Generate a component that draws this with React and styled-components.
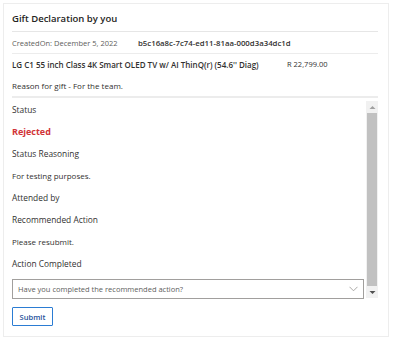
import React from 'react';
import styled, { createGlobalStyle } from 'styled-components';

const GlobalStyle = createGlobalStyle`
  body {
    margin: 0;
    background: #ffffff;
    font-family: "Open Sans", "Noto Sans", sans-serif;
    color: #323130;
  }
`;

const Page = styled.div`
  width: 400px;
  height: 343px;
  padding: 3px;
  box-sizing: border-box;
`;

const Card = styled.div`
  width: 386px;
  height: 334px;
  box-sizing: border-box;
  border: 1px solid #ededed;
  padding: 0 10px 0 8px;
  display: flex;
  flex-direction: column;
`;

const Title = styled.div`
  height: 28px;
  display: flex;
  align-items: center;
  font-size: 9.5px;
  font-weight: 600;
  color: #252423;
  padding-top: 2px;
  box-sizing: border-box;
  border-bottom: 1px solid #e6e6e6;
`;

const Row = styled.div`
  height: ${p => p.$h || 21}px;
  display: flex;
  align-items: center;
  font-size: ${p => p.$size || 7.5}px;
  color: ${p => p.$color || '#323130'};
  border-bottom: ${p => p.$line ? `${p.$line}px solid #ececec` : 'none'};
`;

const Cell = styled.span`
  width: ${p => p.$w ? `${p.$w}px` : 'auto'};
  flex-shrink: 0;
  font-size: ${p => p.$size ? `${p.$size}px` : 'inherit'};
  font-weight: ${p => (p.$bold ? 600 : 'inherit')};
  color: ${p => p.$color || 'inherit'};
  white-space: nowrap;
`;

const ScrollArea = styled.div`
  display: flex;
  gap: 2px;
`;

const Content = styled.div`
  flex: 1;
  display: flex;
  flex-direction: column;
`;

const Field = styled.div`
  height: 22px;
  display: flex;
  align-items: center;
  font-size: ${p => (p.$big ? 9 : p.$value ? 8 : 8.4)}px;
  font-weight: ${p => (p.$strong ? 700 : 400)};
  color: ${p => p.$color || '#323130'};
  flex-shrink: 0;
`;

const Select = styled.div`
  margin-top: 5px;
  height: 20px;
  box-sizing: border-box;
  border: 1px solid #a19f9d;
  display: flex;
  align-items: center;
  justify-content: space-between;
  padding: 0 5px;
  font-size: 7.5px;
  color: #605e5c;
`;

const Scrollbar = styled.div`
  width: 12px;
  margin-top: 3px;
  margin-bottom: 1px;
  background: #f1f1f1;
  display: flex;
  flex-direction: column;
  align-items: center;
`;

const Arrow = styled.div`
  height: 12px;
  width: 100%;
  display: flex;
  align-items: center;
  justify-content: center;
`;

const Thumb = styled.div`
  flex: 1;
  width: 10px;
  background: #c1c1c1;
`;

const Footer = styled.div`
  display: flex;
  padding-top: 8px;
`;

const SubmitButton = styled.button`
  height: 19px;
  width: 41px;
  border: 1px solid #2b7cd3;
  border-radius: 1px;
  background: #fff;
  color: #24509a;
  font-family: inherit;
  font-size: 7.5px;
  font-weight: 600;
  padding: 0;
`;

const Chevron = () => (
  <svg width="9" height="6" viewBox="0 0 9 6">
    <path d="M0.5 0.8 L4.5 4.8 L8.5 0.8" fill="none" stroke="#a19f9d" strokeWidth="0.9" />
  </svg>
);

const Tri = ({ up }) => (
  <svg width="7" height="5" viewBox="0 0 7 5">
    <path d={up ? 'M0.5 4 L3.5 1 L6.5 4 Z' : 'M0.5 1 L3.5 4 L6.5 1 Z'} fill={up ? '#a0a0a0' : '#505050'} />
  </svg>
);

const fields = [
  { text: 'Status' },
  { text: 'Rejected', strong: true, color: '#d13438', big: true },
  { text: 'Status Reasoning' },
  { text: 'For testing purposes.', value: true },
  { text: 'Attended by' },
  { text: 'Recommended Action' },
  { text: 'Please resubmit.', value: true },
  { text: 'Action Completed' },
];

export default function App() {
  return (
    <>
      <GlobalStyle />
      <Page>
        <Card>
          <Title>Gift Declaration by you</Title>
          <Row $h={21} $line={1} $color="#605e5c">
            <Cell $w={126}>CreatedOn: December 5, 2022</Cell>
            <Cell $bold $size={7.8} $color="#323130">b5c16a8c-7c74-ed11-81aa-000d3a34dc1d</Cell>
          </Row>
          <Row $h={20}>
            <Cell $w={275} $bold $size={8}>LG C1 55 inch Class 4K Smart OLED TV w/ AI ThinQ(r) (54.6'' Diag)</Cell>
            <Cell>R 22,799.00</Cell>
          </Row>
          <Row $h={22} $line={2} $size={8}>
            Reason for gift - For the team.
          </Row>
          <ScrollArea>
            <Content>
              {fields.map(f => (
                <Field key={f.text} $value={f.value} $strong={f.strong} $big={f.big} $color={f.color}>
                  {f.text}
                </Field>
              ))}
              <Select>
                <span>Have you completed the recommended action?</span>
                <Chevron />
              </Select>
            </Content>
            <Scrollbar>
              <Arrow><Tri up /></Arrow>
              <Thumb />
              <Arrow><Tri /></Arrow>
            </Scrollbar>
          </ScrollArea>
          <Footer>
            <SubmitButton>Submit</SubmitButton>
          </Footer>
        </Card>
      </Page>
    </>
  );
}
